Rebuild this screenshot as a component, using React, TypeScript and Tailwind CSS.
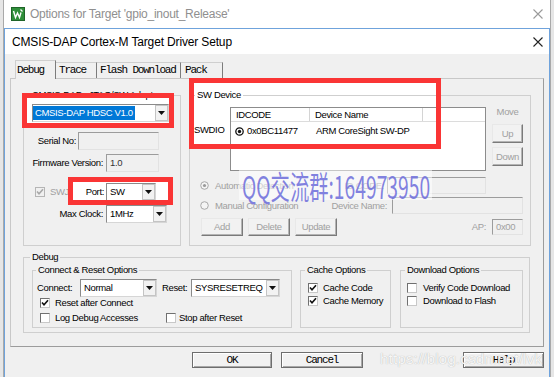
import React from "react";

const mono = "font-['Liberation_Mono',monospace] text-[11px] tracking-[-1.2px]";
const gray = "text-[#a0a0a0]";

function XIcon({ color }: { color: string }) {
  return (
    <svg width="10" height="10" viewBox="0 0 10 10" className="shrink-0">
      <path d="M0.5 0.5l9 9M9.5 0.5l-9 9" stroke={color} strokeWidth="1.1" />
    </svg>
  );
}

function KeilIcon() {
  return (
    <svg width="14" height="14" viewBox="0 0 14 14" className="ml-[7px] shrink-0">
      <rect x="0.5" y="0.5" width="13" height="13" fill="#2f8f3a" stroke="#1f6528" />
      <path d="M2.5 4l2 6.5 2-4.5 2 4.5 1.5-5" stroke="#fff" strokeWidth="1.4" fill="none" />
      <path d="M9.5 2.5l2 2" stroke="#fff" strokeWidth="1.2" />
    </svg>
  );
}

function Arrow() {
  return (
    <span className="flex w-[13px] shrink-0 items-center justify-center border border-[#c4c4c4] bg-[#f2f2f2]">
      <svg width="7" height="4" viewBox="0 0 7 4">
        <path d="M0 0h7L3.5 4z" fill="#111" />
      </svg>
    </span>
  );
}

function Combo({ className, children, pad = "pl-[3px]" }: { className: string; children: React.ReactNode; pad?: string }) {
  return (
    <div
      className={`flex h-[18px] shrink-0 border border-t-[#8a8a8a] border-l-[#8a8a8a] border-b-[#d6d6d6] border-r-[#d6d6d6] bg-white ${className}`}
    >
      <div className={`flex min-w-0 flex-1 items-center whitespace-nowrap ${pad}`}>{children}</div>
      <Arrow />
    </div>
  );
}

function Field({ className, children }: { className: string; children?: React.ReactNode }) {
  return (
    <div
      className={`flex shrink-0 items-center whitespace-nowrap border border-t-[#9c9c9c] border-l-[#9c9c9c] border-b-[#e2e2e2] border-r-[#e2e2e2] bg-[#f0f0f0] pl-[3px] ${className}`}
    >
      {children}
    </div>
  );
}

function Check({ checked, disabled }: { checked?: boolean; disabled?: boolean }) {
  return (
    <span
      className={`flex h-[10px] w-[10px] shrink-0 items-center justify-center border ${
        disabled ? "border-[#b5b5b5] bg-[#f0f0f0]" : "border-t-[#707070] border-l-[#707070] border-b-[#c8c8c8] border-r-[#c8c8c8] bg-white"
      }`}
    >
      {checked && (
        <svg width="8" height="8" viewBox="0 0 8 8">
          <path d="M1 3.5l2 2.2L7 1.2" stroke={disabled ? "#a8a8a8" : "#111"} strokeWidth="1.6" fill="none" />
        </svg>
      )}
    </span>
  );
}

function Radio({ checked }: { checked?: boolean }) {
  return (
    <svg width="9" height="9" viewBox="0 0 9 9" className="shrink-0">
      <circle cx="4.5" cy="4.5" r="3.8" fill="#f4f4f4" stroke="#a8a8a8" strokeWidth="1" />
      {checked && <circle cx="4.5" cy="4.5" r="1.6" fill="#9a9a9a" />}
    </svg>
  );
}

function Btn({ className, children, main }: { className: string; children: React.ReactNode; main?: boolean }) {
  return (
    <div
      className={`flex shrink-0 items-center justify-center border ${
        main
          ? `border-[#6e6e6e] bg-[#f2f2f2] shadow-[inset_1px_1px_0_#ffffff,inset_-1px_-1px_0_#a8a8a8] ${mono} text-black`
          : `border-t-[#e8e8e8] border-l-[#e8e8e8] border-b-[#7a7a7a] border-r-[#7a7a7a] bg-[#f2f2f2] shadow-[inset_-1px_-1px_0_#b4b4b4] ${gray}`
      } ${className}`}
    >
      {children}
    </div>
  );
}

function Group({
  title,
  className,
  legend,
  children,
}: {
  title: string;
  className: string;
  legend: string;
  children: React.ReactNode;
}) {
  return (
    <fieldset className={`shrink-0 border border-[#cfcfcf] ${className}`}>
      <legend className={`whitespace-nowrap px-[2px] leading-[12px] ${legend}`}>{title}</legend>
      {children}
    </fieldset>
  );
}

function Tab({ label, className }: { label: string; className: string }) {
  return (
    <div className={`flex h-[16px] shrink-0 border-t border-r border-t-[#cfcfcf] border-r-[#7c7c7c] pt-[1px] ${mono} ${className}`}>
      <span className="leading-[12px]">{label}</span>
    </div>
  );
}

export default function App() {
  return (
    <div className="relative flex h-[377px] w-[554px] overflow-hidden bg-[#f0f0f0] font-['Liberation_Sans',Arial,sans-serif] text-[9.5px] leading-[12px] tracking-[-0.35px] text-black">
      <div className="w-[4px] shrink-0 border-r border-[#a9a9a9] bg-[#e6e6e6]" />

      <div className="flex w-[546px] shrink-0 flex-col">
        {/* outer window title */}
        <div className="flex h-[28px] shrink-0 items-center bg-white">
          <KeilIcon />
          <span className="ml-[5px] text-[12px] tracking-[-0.25px] text-[#8f8f8f]">
            Options for Target 'gpio_inout_Release'
          </span>
          <span className="ml-auto mr-[7px]">
            <XIcon color="#9a9a9a" />
          </span>
        </div>

        {/* inner dialog */}
        <div className="flex flex-1 flex-col border-x border-t border-[#6fa3dc]">
          <div className="flex h-[25px] shrink-0 items-center justify-between bg-white pl-[7px] pr-[6px] text-[12px] tracking-[-0.15px]">
            <span>CMSIS-DAP Cortex-M Target Driver Setup</span>
            <XIcon color="#222" />
          </div>

          <div className="flex-1 pt-[6px]">
            {/* tabs */}
            <div className="relative z-[2] ml-[10px] flex h-[18px] items-end">
              <div
                className={`-mb-px flex h-[19px] w-[41px] shrink-0 border-l border-t border-r border-l-[#cfcfcf] border-t-[#cfcfcf] border-r-[#7c7c7c] bg-[#f0f0f0] pl-[1px] pt-[3px] ${mono}`}
              >
                <span className="leading-[12px]">Debug</span>
              </div>
              <Tab label="Trace" className="w-[41px] pl-[3px]" />
              <Tab label="Flash Download" className="w-[84px] pl-[3px]" />
              <Tab label="Pack" className="w-[42px] pl-[4px]" />
            </div>

            {/* panel */}
            <div className="ml-[5px] h-[269px] w-[534px] border border-t-[#c8c8c8] border-l-[#c8c8c8] border-b-[#9c9c9c] border-r-[#9c9c9c]">
              <div className="relative z-[2] pl-[12px] pt-[10px]">
                <div className="flex">
                  {/* adapter */}
                  <Group title="CMSIS-DAP - JTAG/SW Adapter" className="h-[157px] w-[158px]" legend="ml-[6px]">
                    <Combo className="ml-[8px] mt-[3px] w-[137px]" pad="pl-0">
                      <span className="bg-[#0078d7] px-[2px] py-[1px] text-white">CMSIS-DAP HDSC V1.0</span>
                    </Combo>
                    <div className="mt-[10px] flex h-[18px] items-center">
                      <span className="w-[52px] text-right">Serial No:</span>
                      <Field className="ml-[2px] h-[18px] w-[81px]" />
                    </div>
                    <div className="mt-[4px] flex h-[18px] items-center">
                      <span className="w-[79px] text-right">Firmware Version:</span>
                      <Field className="ml-[3px] h-[18px] w-[53px] text-[#333]">1.0</Field>
                    </div>
                    <div className="mt-[11px] flex h-[18px] items-center">
                      <div className="flex w-[58px] items-center">
                        <span className="ml-[11px]">
                          <Check checked disabled />
                        </span>
                        <span className={`ml-[5px] ${gray}`}>SWJ</span>
                      </div>
                      <span className="w-[22px] text-right">Port:</span>
                      <Combo className="ml-[2px] w-[50px]">SW</Combo>
                    </div>
                    <div className="mt-[4px] flex h-[18px] items-center">
                      <span className="w-[79px] text-right">Max Clock:</span>
                      <Combo className="ml-[3px] w-[61px]">1MHz</Combo>
                    </div>
                  </Group>

                  {/* SW device */}
                  <Group title="SW Device" className="ml-[8px] h-[157px] w-[342px]" legend="ml-[5px]">
                    <div className="mt-[6px] flex">
                      <span className="ml-[4px] w-[36px] pt-[17px]">SWDIO</span>
                      <div className="h-[64px] w-[256px] shrink-0 border border-[#8c8c8c] bg-white">
                        <div className="flex h-[14px] border-b border-[#dcdcdc]">
                          <span className="w-[79px] border-r border-[#d4d4d4] pl-[5px] leading-[13px]">IDCODE</span>
                          <span className="w-[113px] border-r border-[#d4d4d4] pl-[5px] leading-[13px]">Device Name</span>
                        </div>
                        <div className="flex h-[18px] items-center">
                          <div className="flex w-[79px] items-center">
                            <svg width="9" height="9" viewBox="0 0 9 9" className="ml-[4px] shrink-0">
                              <circle cx="4.5" cy="4.5" r="3.7" fill="none" stroke="#111" strokeWidth="1.3" />
                              <circle cx="4.5" cy="4.5" r="1.7" fill="#111" />
                            </svg>
                            <span className="ml-[3px]">0x0BC11477</span>
                          </div>
                          <span className="pl-[6px]">ARM CoreSight SW-DP</span>
                        </div>
                      </div>
                      <div className="ml-[6px] flex w-[31px] flex-col">
                        <span className={`-mt-px text-center ${gray}`}>Move</span>
                        <Btn className="mt-[6px] h-[19px] w-[31px]">Up</Btn>
                        <Btn className="mt-[4px] h-[19px] w-[31px]">Down</Btn>
                      </div>
                    </div>
                    <div className="mt-[6px] flex h-[17px] items-center">
                      <span className="ml-[10px]">
                        <Radio checked />
                      </span>
                      <span className={`ml-[6px] ${gray}`}>Automatic Detection</span>
                      <span className={`ml-auto mr-[3px] ${gray}`}>ID CODE:</span>
                      <Field className="mr-[44px] h-[17px] w-[99px]" />
                    </div>
                    <div className="mt-[3px] flex h-[17px] items-center">
                      <span className="ml-[10px]">
                        <Radio />
                      </span>
                      <span className={`ml-[6px] ${gray}`}>Manual Configuration</span>
                      <span className={`ml-auto mr-[5px] ${gray}`}>Device Name:</span>
                      <Field className="mr-[7px] h-[17px] w-[131px]" />
                    </div>
                    <div className="mt-[4px] flex h-[18px] items-center">
                      <Btn className="ml-[11px] h-[18px] w-[42px]">Add</Btn>
                      <Btn className="ml-[5px] h-[18px] w-[42px]">Delete</Btn>
                      <Btn className="ml-[5px] h-[18px] w-[42px]">Update</Btn>
                      <span className={`ml-auto mr-[6px] ${gray}`}>AP:</span>
                      <Field className={`mr-[7px] h-[16px] w-[31px] ${gray}`}>0x00</Field>
                    </div>
                  </Group>
                </div>

                {/* debug */}
                <Group title="Debug" className="mt-[5px] h-[82px] w-[507px]" legend="ml-[6px]">
                  <div className="mt-[1px] flex">
                    <Group title="Connect & Reset Options" className="ml-[8px] h-[64px] w-[260px]" legend="ml-[3px]">
                      <div className="mt-[3px] flex h-[18px] items-center">
                        <span className="ml-[4px] w-[43px]">Connect:</span>
                        <Combo className="w-[77px]">Normal</Combo>
                        <span className="ml-[5px] w-[29px]">Reset:</span>
                        <Combo className="w-[89px]">SYSRESETREQ</Combo>
                      </div>
                      <div className="flex h-[12px] items-center">
                        <span className="ml-[7px]">
                          <Check checked />
                        </span>
                        <span className="ml-[5px]">Reset after Connect</span>
                      </div>
                      <div className="mt-[3px] flex h-[12px] items-center">
                        <div className="ml-[7px] flex w-[126px] items-center">
                          <Check />
                          <span className="ml-[5px]">Log Debug Accesses</span>
                        </div>
                        <Check />
                        <span className="ml-[3px]">Stop after Reset</span>
                      </div>
                    </Group>
                    <Group title="Cache Options" className="ml-[8px] h-[64px] w-[91px]" legend="ml-[4px]">
                      <div className="mt-[6px] flex h-[12px] items-center">
                        <span className="ml-[7px]">
                          <Check checked />
                        </span>
                        <span className="ml-[5px]">Cache Code</span>
                      </div>
                      <div className="mt-[1px] flex h-[12px] items-center">
                        <span className="ml-[7px]">
                          <Check checked />
                        </span>
                        <span className="ml-[5px]">Cache Memory</span>
                      </div>
                    </Group>
                    <Group title="Download Options" className="ml-[9px] h-[64px] w-[123px]" legend="ml-[4px]">
                      <div className="mt-[6px] flex h-[12px] items-center">
                        <span className="ml-[6px]">
                          <Check />
                        </span>
                        <span className="ml-[6px]">Verify Code Download</span>
                      </div>
                      <div className="mt-[1px] flex h-[12px] items-center">
                        <span className="ml-[6px]">
                          <Check />
                        </span>
                        <span className="ml-[6px]">Download to Flash</span>
                      </div>
                    </Group>
                  </div>
                </Group>
              </div>
            </div>

            {/* dialog buttons */}
            <div className="ml-[187px] mt-[5px] flex h-[16px]">
              <Btn main className="h-[16px] w-[80px]">OK</Btn>
              <Btn main className="ml-[9px] h-[16px] w-[82px]">Cancel</Btn>
              <Btn main className="ml-[100px] h-[16px] w-[81px]">Help</Btn>
            </div>
          </div>
        </div>
      </div>

      <div className="w-[4px] shrink-0 border-l border-[#a9a9a9] bg-[#e6e6e6]" />

      {/* annotation fills (under the controls) */}
      <div className="absolute left-[27px] top-[98px] z-[1] h-[25px] w-[142px] bg-white" />
      <div className="absolute left-[73px] top-[182px] z-[1] h-[18px] w-[95px] bg-white" />
      <div className="absolute left-[194px] top-[83px] z-[1] h-[61px] w-[242px] bg-white" />

      {/* red annotation frames */}
      <div className="pointer-events-none absolute left-[22px] top-[93px] z-[3] h-[35px] w-[152px] border-[5px] border-[#fa3535]" />
      <div className="pointer-events-none absolute left-[68px] top-[177px] z-[3] h-[28px] w-[105px] border-[5px] border-[#fa3535]" />
      <div className="pointer-events-none absolute left-[189px] top-[78px] z-[3] h-[71px] w-[252px] border-[5px] border-[#fa3535]" />

      {/* watermarks */}
      <div className="pointer-events-none absolute left-[239px] top-[170px] z-[4] flex h-[30px] w-[193px] items-center overflow-visible bg-white/50">
        <span className="ml-[3px] inline-block origin-left scale-x-[0.665] scale-y-[1.1] whitespace-nowrap font-['Noto_Sans_CJK_SC','Noto_Sans',sans-serif] text-[29px] font-normal leading-[30px] tracking-normal text-[#6c6cdb]/85">
          QQ交流群:164973950
        </span>
      </div>
      <span className="pointer-events-none absolute left-[380px] top-[350px] z-[4] whitespace-nowrap text-[15.5px] leading-[18px] tracking-normal text-[#f6f6f6] [text-shadow:0_0_1px_#a8a8a8]">
        https://blog.csdn.net/lvk
      </span>
    </div>
  );
}
